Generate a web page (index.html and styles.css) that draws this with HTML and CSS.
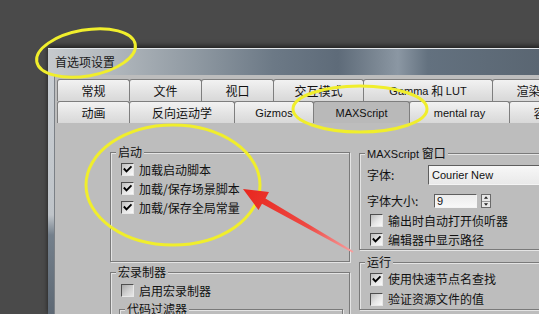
FILE: index.html
```html
<!DOCTYPE html>
<html>
<head>
<meta charset="utf-8">
<link rel="stylesheet" href="styles.css">
</head>
<body>
<div class="desk">
  <div class="win">
    <div class="titlebar"><span class="title">首选项设置</span></div>
    <div class="client">
      <div class="frame"></div>
      <div class="content">
        <div class="tabrow">
          <div class="tab w73">常规</div>
          <div class="tab w73">文件</div>
          <div class="tab w73">视口</div>
          <div class="tab w91">交互模式</div>
          <div class="tab w130"><span class="lt">Gamma</span>&nbsp;和&nbsp;<span class="lt">LUT</span></div>
          <div class="tab w73">渲染</div>
        </div>
        <div class="tabrow">
          <div class="tab w73">动画</div>
          <div class="tab w106">反向运动学</div>
          <div class="tab w80"><span class="lt">Gizmos</span></div>
          <div class="tab w97 sel"><span class="lt">MAXScript</span></div>
          <div class="tab w101"><span class="lt">mental ray</span></div>
          <div class="tab w73">容器</div>
        </div>
        <div class="page">
          <div class="lcol">
            <fieldset class="grp g-start">
              <legend>启动</legend>
              <div class="rows">
                <div class="row"><span class="cb on"><svg viewBox="0 0 11 11"><path d="M2.5 5.2 L4.5 7.4 L8.8 3"/></svg></span><span>加载启动脚本</span></div>
                <div class="row"><span class="cb on"><svg viewBox="0 0 11 11"><path d="M2.5 5.2 L4.5 7.4 L8.8 3"/></svg></span><span>加载/保存场景脚本</span></div>
                <div class="row"><span class="cb on"><svg viewBox="0 0 11 11"><path d="M2.5 5.2 L4.5 7.4 L8.8 3"/></svg></span><span>加载/保存全局常量</span></div>
              </div>
            </fieldset>
            <fieldset class="grp g-macro">
              <legend>宏录制器</legend>
              <div class="rows r-macro">
                <div class="row"><span class="cb dis"></span><span>启用宏录制器</span></div>
              </div>
              <fieldset class="grp g-filter">
                <legend>代码过滤器</legend>
              </fieldset>
            </fieldset>
          </div>
          <div class="rcol">
            <fieldset class="grp g-win">
              <legend><span class="lt">MAXScript</span> 窗口</legend>
              <div class="frow">
                <span class="flabel l1">字体:</span>
                <div class="select"><span class="lt">Courier New</span></div>
              </div>
              <div class="frow f2">
                <span class="flabel l2">字体大小:</span>
                <div class="input"><span class="lt">9</span></div>
                <div class="spin">
                  <span class="half"><svg viewBox="0 0 8 6"><path d="M4 1.5 L6.5 4.5 L1.5 4.5 Z"/></svg></span>
                  <span class="half"><svg viewBox="0 0 8 6"><path d="M1.5 1.5 L6.5 1.5 L4 4.5 Z"/></svg></span>
                </div>
              </div>
              <div class="rows">
                <div class="row"><span class="cb"></span><span>输出时自动打开侦听器</span></div>
                <div class="row"><span class="cb on"><svg viewBox="0 0 11 11"><path d="M2.5 5.2 L4.5 7.4 L8.8 3"/></svg></span><span>编辑器中显示路径</span></div>
              </div>
            </fieldset>
            <fieldset class="grp g-run">
              <legend>运行</legend>
              <div class="rows r-run">
                <div class="row"><span class="cb on"><svg viewBox="0 0 11 11"><path d="M2.5 5.2 L4.5 7.4 L8.8 3"/></svg></span><span>使用快速节点名查找</span></div>
                <div class="row"><span class="cb"></span><span>验证资源文件的值</span></div>
              </div>
            </fieldset>
          </div>
        </div>
      </div>
    </div>
  </div>
</div>
<svg class="annot" width="539" height="314" viewBox="0 0 539 314">
  <defs>
    <linearGradient id="ar" x1="243" y1="189" x2="353" y2="252" gradientUnits="userSpaceOnUse">
      <stop offset="0" stop-color="#e8261e"/>
      <stop offset="0.6" stop-color="#ee4a44"/>
      <stop offset="1" stop-color="#f6a0a0"/>
    </linearGradient>
  </defs>
  <ellipse cx="86" cy="53" rx="50" ry="23" transform="rotate(-10 86 53)" class="ring"/>
  <ellipse cx="360" cy="109" rx="67" ry="23" class="ring"/>
  <ellipse cx="173" cy="185" rx="87" ry="60" class="ring"/>
  <polygon points="243,189 269,192 265.5,198.5 353.5,251.2 352.6,252.8 262,203.8 258.5,210" fill="url(#ar)"/>
</svg>
</body>
</html>
```

FILE: styles.css
```css
* { box-sizing: border-box; }
html, body { margin: 0; padding: 0; }
body {
  width: 539px;
  height: 314px;
  overflow: hidden;
  position: relative;
  background: #4a4a4a;
  font-family: "Noto Sans CJK SC", "Liberation Sans", sans-serif;
  font-size: 12px;
  color: #111;
}
.lt { font-family: "Liberation Sans", "Noto Sans CJK SC", sans-serif; font-size: 11px; }
.desk { padding: 48px 0 0 48px; }
.win {
  width: 620px;
  border-top: 1px solid #e2e6ea;
  box-shadow: 0 -2px 5px rgba(0,0,0,0.6);
}
.titlebar {
  height: 26px;
  display: flex;
  align-items: center;
  padding-left: 7px;
  background: linear-gradient(90deg, #c6cacd 0, #b3b9be 60px, #8e98a1 150px, #6c7986 225px, #5e6b79 290px, #7c8894 330px, #8b97a3 350px, #63717f 380px, #5a6672 491px);
}
.title { line-height: 14px; color: #1a1a1a; }
.client { display: flex; height: 240px; }
.frame {
  width: 7px;
  background: linear-gradient(180deg, #c9ced3 0, #bfc4c9 140px, #74808c 160px, #5d6874 240px);
  border-right: 1px solid #7b8086;
}
.content {
  flex: 1;
  background: #bdbdbd;
  padding: 4px 0 0 2px;
}
.tabrow { display: flex; height: 22px; }
.tab {
  height: 22px;
  border: 1px solid #7e7e7e;
  border-bottom: none;
  border-radius: 3px 3px 0 0;
  background: linear-gradient(180deg, #f2f2f2 0, #e2e2e2 60%, #d8d8d8 100%);
  display: flex;
  align-items: center;
  justify-content: center;
  margin-right: -1px;
  flex: none;
  line-height: 14px;
  white-space: nowrap;
}
.tab.sel { background: #b9b9b9; }
.w73 { width: 73px; }
.w80 { width: 80px; }
.w91 { width: 91px; }
.w97 { width: 97px; }
.w101 { width: 101px; }
.w106 { width: 106px; }
.w130 { width: 130px; }
.page {
  display: flex;
  gap: 9px;
  padding: 22px 0 0 53px;
  height: 200px;
  background: #bdbdbd;
}
.lcol { width: 240px; flex: none; }
.rcol { width: 220px; flex: none; }
.grp {
  margin: 0;
  padding: 0 0 0 5px;
  border: 1px solid #7a7a7a;
  box-shadow: inset 1px 1px 0 #e4e4e4, 1px 1px 0 #e4e4e4;
  min-width: 0;
}
legend {
  padding: 0 2px;
  line-height: 14px;
  background: #bdbdbd;
  white-space: nowrap;
}
.g-start { height: 117px; }
.g-macro { margin-top: 3px; height: 80px; }
.g-filter { margin: 2px 6px 0 3px; height: 40px; }
.g-win { margin-top: 1px; padding-bottom: 0; }
.g-run { margin-top: 5px; }
.rows { padding: 1px 0 0 5px; }
.r-macro { padding-top: 2px; }
.r-run { padding-top: 0; }
.r-run .row { height: 20px; }
.row {
  display: flex;
  align-items: center;
  gap: 5px;
  height: 19px;
  white-space: nowrap;
  line-height: 14px;
}
.cb {
  width: 13px;
  height: 13px;
  flex: none;
  border-top: 1px solid #4e4e4e;
  border-left: 1px solid #4e4e4e;
  border-right: 1px solid #e8e8e8;
  border-bottom: 1px solid #e8e8e8;
  background: linear-gradient(135deg, #bcbcbc 0, #e6e6e6 55%, #fafafa 100%);
  display: block;
}
.cb.dis { background: linear-gradient(135deg, #a8a8a8 0, #d0d0d0 55%, #e6e6e6 100%); }
.cb svg { display: block; width: 11px; height: 11px; }
.cb svg path { fill: none; stroke: #000; stroke-width: 1.9; stroke-linecap: square; }
.frow {
  display: flex;
  align-items: center;
  height: 21px;
  margin-top: 3px;
  padding-left: 2px;
  white-space: nowrap;
}
.f2 { height: 18px; margin-top: 7px; }
.flabel { line-height: 14px; flex: none; }
.l1 { width: 61px; }
.l2 { width: 67px; }
.select {
  width: 140px;
  height: 20px;
  flex: none;
  border-top: 1px solid #5e5e5e;
  border-left: 1px solid #5e5e5e;
  border-right: 1px solid #f4f4f4;
  border-bottom: 1px solid #f4f4f4;
  background: linear-gradient(180deg, #f7f7f7, #e9e9e9);
  display: flex;
  align-items: center;
  padding-left: 3px;
}
.input {
  width: 43px;
  height: 14px;
  flex: none;
  border-top: 1px solid #5e5e5e;
  border-left: 1px solid #5e5e5e;
  border-right: 1px solid #f4f4f4;
  border-bottom: 1px solid #f4f4f4;
  background: linear-gradient(180deg, #ececec, #f8f8f8);
  display: flex;
  align-items: center;
  padding-left: 2px;
  line-height: 12px;
}
.spin {
  width: 10px;
  height: 14px;
  margin-left: 4px;
  flex: none;
  display: flex;
  flex-direction: column;
  border: 1px solid #6a6a6a;
  background: #e8e8e8;
}
.half { flex: 1; display: flex; align-items: center; justify-content: center; }
.half + .half { border-top: 1px solid #9a9a9a; }
.half svg { width: 8px; height: 5px; display: block; }
.half svg path { fill: #222; }
.annot { position: absolute; left: 0; top: 0; pointer-events: none; }
.ring { fill: none; stroke: #f0ee2c; stroke-width: 3; }
```
